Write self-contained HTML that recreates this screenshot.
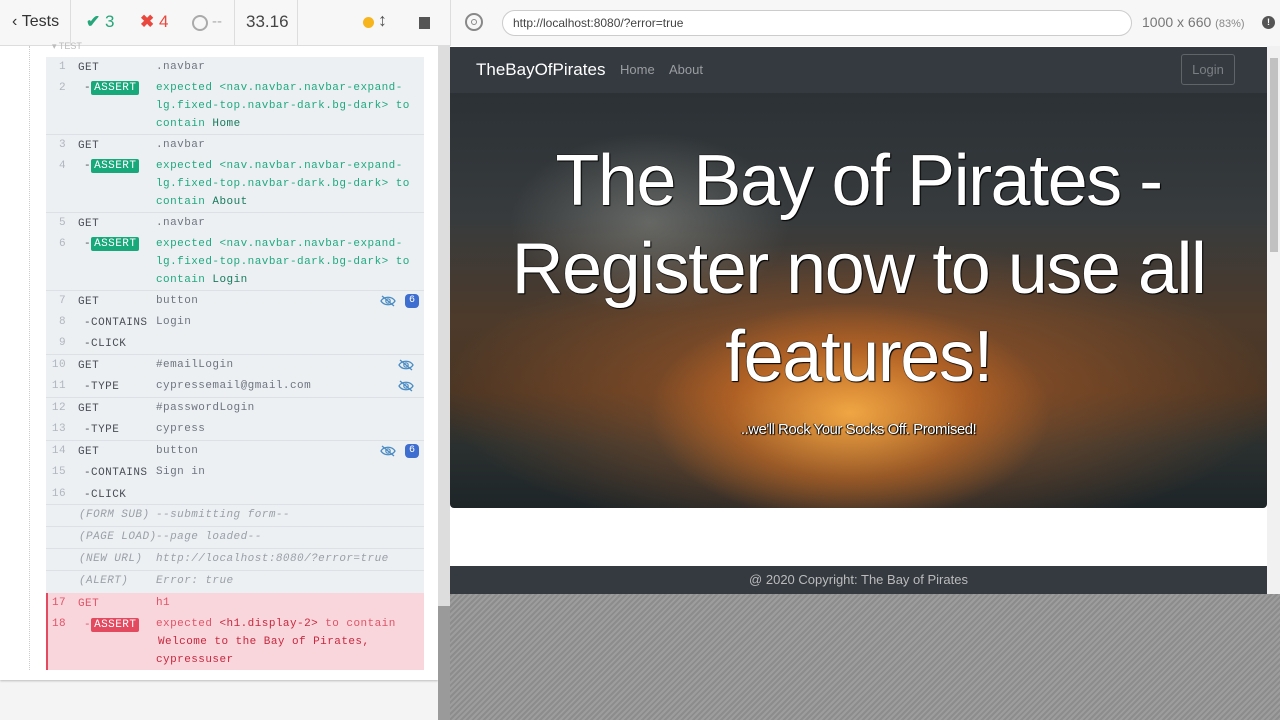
<!DOCTYPE html>
<html><head><meta charset="utf-8"><style>
*{margin:0;padding:0;box-sizing:border-box}
body{width:1280px;height:720px;overflow:hidden;position:relative;background:#f4f4f4;font-family:"Liberation Sans",sans-serif}
.a{position:absolute;white-space:nowrap}
.m{font-family:"Liberation Mono","DejaVu Sans Mono",monospace;font-size:11px;letter-spacing:0.45px;line-height:16px}
.n{color:#b0b6bf;width:22px;text-align:right;left:44px}
.k{color:#4a4f57;left:78px}
.v{color:#6e7580;left:156px}
.g{color:#1fa980}
.badge{background:#18a97b;color:#fff;padding:1px 3px;border-radius:2px}
.rb{background:#e3495f;color:#fff;padding:1px 3px;border-radius:2px}
.sep{position:absolute;left:46px;width:378px;height:1px;background:#dde1e5}
.i{font-style:italic;color:#9aa0a8}
.r{color:#e05468}
.eye{position:absolute;width:16px;height:12px}
.six{position:absolute;width:14px;height:14px;border-radius:4px;background:#3e6ed0;color:#fff;font-size:10px;text-align:center;line-height:14px;font-family:"Liberation Mono",monospace}
</style></head><body>
<div class="a" style="left:0;top:0;width:438px;height:680px;background:#fff;box-shadow:0 1px 2px #bbb"></div>
<div class="a" style="left:0;top:0;width:450px;height:46px;background:#f7f7f7;border-bottom:1px solid #ddd"></div>
<div class="a" style="top:46px;width:0;height:624px;border-left:1px dotted #ccc;left:29px"></div>
<div class="a" style="left:12px;top:13px;font-size:16px;color:#333">&#8249;&nbsp;Tests</div>
<div class="a" style="left:70px;top:0;width:1px;height:46px;background:#ddd"></div>
<div class="a" style="left:86px;top:12px;font-size:17px;color:#26a67b"><b>&#10004;</b> 3</div>
<div class="a" style="left:140px;top:12px;font-size:17px;color:#e9483f"><b>&#10006;</b> 4</div>
<div class="a" style="left:192px;top:15px;width:16px;height:16px;border:2px solid #aaa;border-radius:50%"></div>
<div class="a" style="left:212px;top:13px;font-size:15px;color:#aaa">--</div>
<div class="a" style="left:234px;top:0;width:1px;height:46px;background:#ddd"></div>
<div class="a" style="left:246px;top:12px;font-size:17px;color:#444">33.16</div>
<div class="a" style="left:297px;top:0;width:1px;height:46px;background:#ddd"></div>
<div class="a" style="left:363px;top:17px;width:11px;height:11px;border-radius:50%;background:#f7b51d"></div>
<div class="a" style="left:378px;top:10px;font-size:18px;font-weight:bold;color:#555">&#8597;</div>
<div class="a" style="left:419px;top:17px;width:11px;height:12px;background:#555"></div>
<div class="a" style="left:52px;top:41px;font-size:9px;color:#bbb">&#9662; TEST</div>
<div class="a" style="left:46px;top:57px;width:378px;height:536px;background:#edf0f3"></div>
<div class="a" style="left:46px;top:593px;width:378px;height:77px;background:#f8d6db;border-left:2px solid #e3495f"></div>
<div class="sep" style="top:134px"></div><div class="sep" style="top:212px"></div><div class="sep" style="top:290px"></div>
<div class="sep" style="top:354px"></div><div class="sep" style="top:397px"></div><div class="sep" style="top:440px"></div>
<div class="sep" style="top:504px"></div><div class="sep" style="top:526px"></div><div class="sep" style="top:548px"></div><div class="sep" style="top:570px"></div>

<div class="a m n" style="top:59px">1</div><div class="a m k" style="top:60px">GET</div><div class="a m v" style="top:59px">.navbar</div>
<div class="a m n" style="top:80px">2</div><div class="a m k" style="top:80px;left:84px">-<span class="badge">ASSERT</span></div><div class="a m g" style="top:80px;left:156px">expected &lt;nav.navbar.navbar-expand-</div>
<div class="a m g" style="top:98px;left:156px">lg.fixed-top.navbar-dark.bg-dark&gt; to</div>
<div class="a m g" style="top:116px;left:156px">contain <span style="color:#177a5c">Home</span></div>

<div class="a m n" style="top:137px">3</div><div class="a m k" style="top:138px">GET</div><div class="a m v" style="top:137px">.navbar</div>
<div class="a m n" style="top:158px">4</div><div class="a m k" style="top:158px;left:84px">-<span class="badge">ASSERT</span></div><div class="a m g" style="top:158px;left:156px">expected &lt;nav.navbar.navbar-expand-</div>
<div class="a m g" style="top:176px;left:156px">lg.fixed-top.navbar-dark.bg-dark&gt; to</div>
<div class="a m g" style="top:194px;left:156px">contain <span style="color:#177a5c">About</span></div>

<div class="a m n" style="top:215px">5</div><div class="a m k" style="top:216px">GET</div><div class="a m v" style="top:215px">.navbar</div>
<div class="a m n" style="top:236px">6</div><div class="a m k" style="top:236px;left:84px">-<span class="badge">ASSERT</span></div><div class="a m g" style="top:236px;left:156px">expected &lt;nav.navbar.navbar-expand-</div>
<div class="a m g" style="top:254px;left:156px">lg.fixed-top.navbar-dark.bg-dark&gt; to</div>
<div class="a m g" style="top:272px;left:156px">contain <span style="color:#177a5c">Login</span></div>

<div class="a m n" style="top:293px">7</div><div class="a m k" style="top:294px">GET</div><div class="a m v" style="top:293px">button</div>
<div class="a m n" style="top:314px">8</div><div class="a m k" style="top:315px;left:84px">-CONTAINS</div><div class="a m v" style="top:314px">Login</div>
<div class="a m n" style="top:335px">9</div><div class="a m k" style="top:336px;left:84px">-CLICK</div>
<div class="a m n" style="top:357px">10</div><div class="a m k" style="top:358px">GET</div><div class="a m v" style="top:357px">#emailLogin</div>
<div class="a m n" style="top:378px">11</div><div class="a m k" style="top:379px;left:84px">-TYPE</div><div class="a m v" style="top:378px">cypressemail@gmail.com</div>
<div class="a m n" style="top:400px">12</div><div class="a m k" style="top:401px">GET</div><div class="a m v" style="top:400px">#passwordLogin</div>
<div class="a m n" style="top:421px">13</div><div class="a m k" style="top:422px;left:84px">-TYPE</div><div class="a m v" style="top:421px">cypress</div>
<div class="a m n" style="top:443px">14</div><div class="a m k" style="top:444px">GET</div><div class="a m v" style="top:443px">button</div>
<div class="a m n" style="top:464px">15</div><div class="a m k" style="top:465px;left:84px">-CONTAINS</div><div class="a m v" style="top:464px">Sign in</div>
<div class="a m n" style="top:486px">16</div><div class="a m k" style="top:487px;left:84px">-CLICK</div>

<div class="a m i" style="top:507px;left:79px">(FORM SUB)</div><div class="a m i" style="top:507px;left:156px">--submitting form--</div>
<div class="a m i" style="top:529px;left:79px">(PAGE LOAD)</div><div class="a m i" style="top:529px;left:156px">--page loaded--</div>
<div class="a m i" style="top:551px;left:79px">(NEW URL)</div><div class="a m i" style="top:551px;left:156px">http://localhost:8080/?error=true</div>
<div class="a m i" style="top:573px;left:79px">(ALERT)</div><div class="a m i" style="top:573px;left:156px">Error: true</div>

<div class="a m r" style="top:595px;left:52px">17</div><div class="a m r" style="top:596px;left:78px">GET</div><div class="a m r" style="top:595px;left:156px">h1</div>
<div class="a m r" style="top:616px;left:52px">18</div><div class="a m r" style="top:617px;left:84px">-<span class="rb">ASSERT</span></div><div class="a m r" style="top:616px;left:156px">expected <span style="color:#c8283f">&lt;h1.display-2&gt;</span> to contain</div>
<div class="a m" style="top:634px;left:158px;color:#c8283f">Welcome to the Bay of Pirates,</div>
<div class="a m" style="top:652px;left:156px;color:#c8283f">cypressuser</div>

<svg class="eye" style="left:380px;top:295px" viewBox="0 0 16 12"><path d="M1 6C4 1 12 1 15 6C12 11 4 11 1 6Z M2 1L14 11" fill="none" stroke="#4a8cc4" stroke-width="1.3"/><circle cx="8" cy="6" r="2.2" fill="none" stroke="#4a8cc4" stroke-width="1.2"/></svg>
<div class="six" style="left:405px;top:294px">6</div>
<svg class="eye" style="left:398px;top:359px" viewBox="0 0 16 12"><path d="M1 6C4 1 12 1 15 6C12 11 4 11 1 6Z M2 1L14 11" fill="none" stroke="#4a8cc4" stroke-width="1.3"/><circle cx="8" cy="6" r="2.2" fill="none" stroke="#4a8cc4" stroke-width="1.2"/></svg>
<svg class="eye" style="left:398px;top:380px" viewBox="0 0 16 12"><path d="M1 6C4 1 12 1 15 6C12 11 4 11 1 6Z M2 1L14 11" fill="none" stroke="#4a8cc4" stroke-width="1.3"/><circle cx="8" cy="6" r="2.2" fill="none" stroke="#4a8cc4" stroke-width="1.2"/></svg>
<svg class="eye" style="left:380px;top:445px" viewBox="0 0 16 12"><path d="M1 6C4 1 12 1 15 6C12 11 4 11 1 6Z M2 1L14 11" fill="none" stroke="#4a8cc4" stroke-width="1.3"/><circle cx="8" cy="6" r="2.2" fill="none" stroke="#4a8cc4" stroke-width="1.2"/></svg>
<div class="six" style="left:405px;top:444px">6</div>

<div class="a" style="left:438px;top:46px;width:12px;height:674px;background:#ddd"></div>
<div class="a" style="left:438px;top:606px;width:12px;height:114px;background:#9a9a9a"></div>

<div class="a" style="left:450px;top:0;width:830px;height:46px;background:#f7f7f7;border-left:1px solid #ddd"></div>
<div class="a" style="left:465px;top:13px;width:18px;height:18px;border:2px solid #888;border-radius:50%"></div>
<div class="a" style="left:471px;top:19px;width:6px;height:6px;border:1px solid #888;border-radius:50%"></div>
<div class="a" style="left:502px;top:10px;width:630px;height:26px;border:1px solid #ccc;border-radius:13px;background:#fff;font-size:12px;color:#444;padding:5px 10px">http://localhost:8080/?error=true</div>
<div class="a" style="left:1142px;top:14px;font-size:14px;color:#777">1000 x 660 <span style="font-size:11px;color:#888">(83%)</span></div>
<div class="a" style="left:1262px;top:16px;width:13px;height:13px;border-radius:50%;background:#555;color:#fff;font-size:9px;text-align:center;line-height:13px;font-weight:bold">!</div>

<div class="a" style="left:450px;top:594px;width:830px;height:126px;background:repeating-linear-gradient(135deg,#8c8c8c 0 2px,#9d9d9d 2px 4px)"></div>
<div class="a" style="left:450px;top:46px;width:817px;height:548px;background:#fff"></div>
<div class="a" style="left:1267px;top:46px;width:13px;height:548px;background:#f1f1f1"></div>
<div class="a" style="left:1270px;top:58px;width:8px;height:194px;background:#c1c1c1"></div>
<div class="a" style="left:450px;top:47px;width:817px;height:46px;background:#343a40"></div>
<div class="a" style="left:476px;top:60px;font-size:17px;color:#fff">TheBayOfPirates</div>
<div class="a" style="left:620px;top:62px;font-size:13px;color:#9a9da1">Home</div>
<div class="a" style="left:669px;top:62px;font-size:13px;color:#9a9da1">About</div>
<div class="a" style="left:1181px;top:54px;width:54px;height:31px;border:1px solid #5f6468;border-radius:3px;color:#7b7f84;font-size:13px;text-align:center;line-height:29px">Login</div>
<div class="a" style="left:450px;top:93px;width:817px;height:415px;border-radius:0 0 4px 4px;overflow:hidden;
background:
radial-gradient(ellipse 200px 110px at 400px 320px,rgba(250,175,70,.9),rgba(215,115,35,.5) 60%,transparent 100%),
radial-gradient(ellipse 420px 150px at 410px 300px,rgba(190,100,40,.75),transparent 100%),
radial-gradient(ellipse 140px 90px at 200px 130px,rgba(170,170,160,.4),transparent),
linear-gradient(180deg,#2b3135 0%,#373b3d 30%,#4d3a2a 55%,#4a3524 72%,#2a302f 85%,#1e2528 100%)"></div>
<div class="a" style="left:450px;top:137px;width:817px;text-align:center;font-size:72px;line-height:88px;color:#fff;letter-spacing:-1.5px;text-shadow:0 0 1px #000,0 0 1px #000,1px 1px 1px #000;white-space:normal">The Bay of Pirates -<br>Register now to use all<br>features!</div>
<div class="a" style="left:450px;top:421px;width:817px;text-align:center;font-size:15px;color:#fff;letter-spacing:-0.5px;text-shadow:1px 1px 1px #000,-1px 0 1px #000">..we'll Rock Your Socks Off. Promised!</div>
<div class="a" style="left:450px;top:566px;width:817px;height:28px;background:#343a40;color:#bbb;font-size:13px;text-align:center;line-height:28px">@ 2020 Copyright: The Bay of Pirates</div>
</body></html>
